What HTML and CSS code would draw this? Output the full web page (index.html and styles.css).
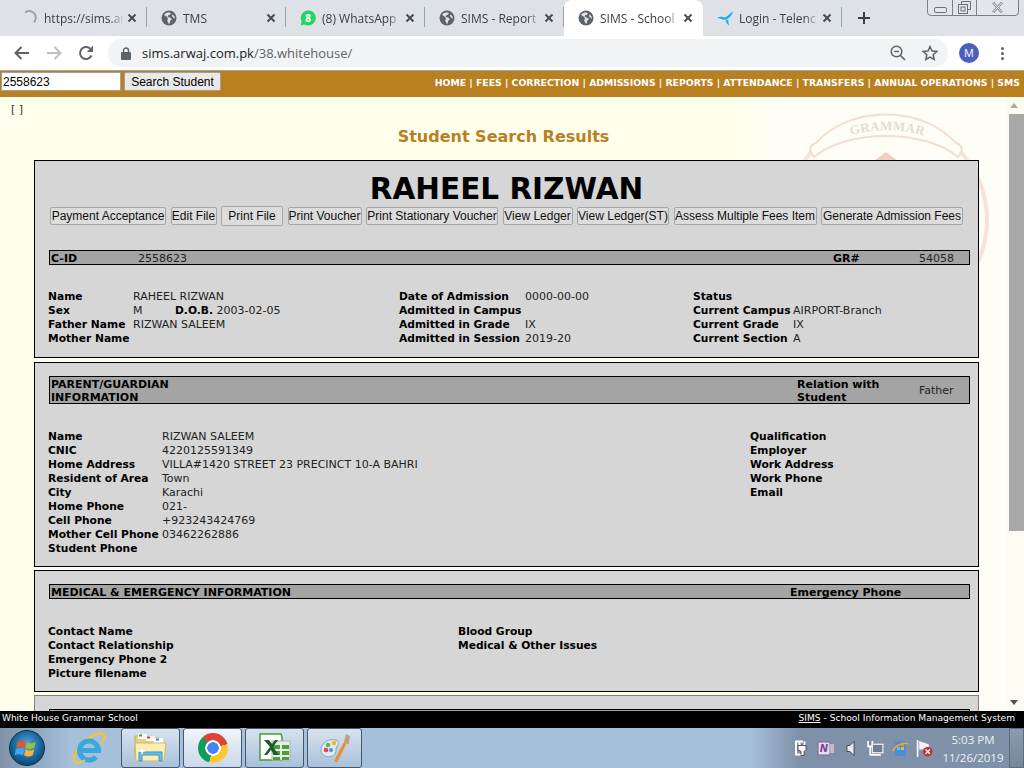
FILE: index.html
```html
<!DOCTYPE html>
<html>
<head>
    <title>SIMS - School Information Management System</title>
    <link rel="stylesheet" href="styles.css">
</head>
<body>

<svg class="defs" width="0" height="0">
    <symbol id="globe" viewBox="0 0 16 16">
        <circle cx="8" cy="8" r="7.5" fill="#5f6368"/>
        <path d="M8 2.2 5 3 3 5l2.6 1.4L7 8.6l-.8 2.2 1.6 2.9.9-.1.4-2.6 1.9-2-2.6-1.7-1.7-.4.4-1.6 1.6-.2L10 3.6z" fill="#dee1e6"/>
        <path d="M11.6 4.2l2 2.4.2 2.3-1.6-1.5-1.3-1.3z" fill="#dee1e6"/>
    </symbol>
    <symbol id="close" viewBox="0 0 10 10">
        <path d="M1.5 1.5l7 7M8.5 1.5l-7 7" stroke="#45494d" stroke-width="1.9" fill="none"/>
    </symbol>
</svg>

<div class="browser">

    <div class="tabstrip">
        <div class="tab">
            <svg class="tab-icon" viewBox="0 0 16 16"><path d="M3 2.6A6.5 6.5 0 0 1 13.5 9a6 6 0 0 1-1.5 3.4" fill="none" stroke="#9b9da1" stroke-width="1.8"/></svg>
            <span class="tab-title">https://sims.ar</span>
            <svg class="tab-close"><use href="#close"/></svg>
        </div>
        <div class="tab">
            <svg class="tab-icon"><use href="#globe"/></svg>
            <span class="tab-title">TMS</span>
            <svg class="tab-close"><use href="#close"/></svg>
        </div>
        <div class="tab">
            <svg class="tab-icon" viewBox="0 0 16 16">
                <path d="M.5 15.500l1.200-4A7.500 7.500 0 1 1 4.500 14.400z" fill="#25d366"/>
                <text x="8" y="11.500" class="wa-count">8</text>
            </svg>
            <span class="tab-title">(8) WhatsApp</span>
            <svg class="tab-close"><use href="#close"/></svg>
        </div>
        <div class="tab">
            <svg class="tab-icon"><use href="#globe"/></svg>
            <span class="tab-title">SIMS - Report</span>
            <svg class="tab-close"><use href="#close"/></svg>
        </div>
        <div class="tab tab-active">
            <svg class="tab-icon"><use href="#globe"/></svg>
            <span class="tab-title">SIMS - School</span>
            <svg class="tab-close"><use href="#close"/></svg>
        </div>
        <div class="tab tab-last">
            <svg class="tab-icon" viewBox="0 0 17 16">
                <path d="M0 8C3 6 6 6.500 8.500 7.500 11 6.500 14 3 17 .5 16 5 13 8.500 10 9.500 7 10.500 3 8 0 8z" fill="#19aaf8"/>
                <path d="M9 10.500c1 0 2-.5 2.800-1 .2 2.500.6 4.500 1.200 6.500-2-1-3.500-3-4-5.500z" fill="#19aaf8"/>
            </svg>
            <span class="tab-title">Login - Telenc</span>
            <svg class="tab-close"><use href="#close"/></svg>
        </div>
        <svg class="new-tab" viewBox="0 0 12 12"><path d="M6 0v12M0 6h12" stroke="#3c4043" stroke-width="2"/></svg>
        <div class="window-controls">
            <div class="win-btn win-min"><svg width="13" height="7" viewBox="0 0 13 7"><rect x=".5" y=".5" width="12" height="5" rx="1.500" fill="#e6e8ec" stroke="#6c7076"/></svg></div>
            <div class="win-btn win-max"><svg width="13" height="13" viewBox="0 0 13 13"><path d="M3.500 3V.5h9v8H10" fill="none" stroke="#6c7076"/><rect x=".5" y="3.500" width="9" height="9" fill="#e6e8ec" stroke="#6c7076"/><rect x="3" y="6" width="4" height="4" fill="none" stroke="#6c7076"/></svg></div>
            <div class="win-btn win-close"><svg width="13" height="11" viewBox="0 0 13 11"><path d="M2 .5l9 10M11 .5l-9 10" stroke="#868a90" stroke-width="2.500"/><path d="M2 .5l9 10M11 .5l-9 10" stroke="#eceef1" stroke-width="1"/></svg></div>
        </div>
    </div>

    <div class="toolbar">
        <div class="nav-btn"><svg width="16" height="14" viewBox="0 0 16 14"><path d="M15 7H2M7.500 1 1.500 7l6 6" fill="none" stroke="#5f6368" stroke-width="2"/></svg></div>
        <div class="nav-btn"><svg width="16" height="14" viewBox="0 0 16 14"><path d="M1 7h13M8.500 1l6 6-6 6" fill="none" stroke="#bdc1c6" stroke-width="2"/></svg></div>
        <div class="nav-btn"><svg width="16" height="16" viewBox="0 0 16 16"><path d="M13.500 10.500A6 6 0 1 1 12.300 3.800" fill="none" stroke="#5f6368" stroke-width="2"/><path d="M15 .8V7H8.800z" fill="#5f6368"/></svg></div>
        <div class="omnibox">
            <svg class="lock" width="10" height="13" viewBox="0 0 10 13"><path d="M2.500 6V3.500a2.500 2.500 0 0 1 5 0V6" fill="none" stroke="#5f6368" stroke-width="1.400"/><rect y="5" width="10" height="8" rx="1" fill="#5f6368"/></svg>
            <span class="url">sims.arwaj.com.pk<span class="url-path">/38.whitehouse/</span></span>
            <svg class="omni-icon" viewBox="0 0 16 16"><circle cx="6.500" cy="6.500" r="5.300" fill="none" stroke="#5f6368" stroke-width="1.500"/><path d="M10.500 10.500l4.500 4.500" stroke="#5f6368" stroke-width="1.700"/><path d="M4 6.500h5" stroke="#5f6368" stroke-width="1.400"/></svg>
            <svg class="omni-icon" viewBox="0 0 16 16"><path d="M8 1.500l2 4.500 4.800.5-3.600 3.200 1 4.800L8 12.100 3.800 14.500l1-4.800L1.200 6.500 6 6z" fill="none" stroke="#5f6368" stroke-width="1.500"/></svg>
        </div>
        <div class="avatar">M</div>
        <div class="kebab"><i></i><i></i><i></i></div>
    </div>

    <div class="topnav">
        <form class="search">
            <input class="search-input" type="text" value="2558623">
            <input class="search-btn" type="button" value="Search Student">
        </form>
        <div class="menu">
            <a>HOME</a> | <a>FEES</a> | <a>CORRECTION</a> | <a>ADMISSIONS</a> | <a>REPORTS</a> | <a>ATTENDANCE</a> | <a>TRANSFERS</a> | <a>ANNUAL OPERATIONS</a> | <a>SMS</a>
        </div>
    </div>

    <div class="page">
        <div class="page-main">
            <!-- school crest behind the cards -->
            <svg class="crest" width="245" height="400" viewBox="0 0 245 400">
                <defs><path id="crest-arc" d="M88 39A130 130 0 0 1 164 39"/></defs>
                <circle cx="126" cy="123" r="101" fill="none" stroke="#f6e2d8" stroke-width="4"/>
                <path d="M54 60C48 52 50 48 56 46 90 8 162 8 196 46 202 48 204 52 198 60 165 32 87 32 54 60z" fill="#fffef6" stroke="#f3ddd0" stroke-width="2"/>
                <path d="M114 64l12-9 12 9z" fill="#f3cfc0"/>
                <text class="crest-text"><textPath href="#crest-arc" startOffset="3">GRAMMAR</textPath></text>
            </svg>

            <div class="crumbs">[ ]</div>
            <h1 class="results-title">Student Search Results</h1>

            <div class="card card-student">
                <div class="student-name">RAHEEL RIZWAN</div>
                <div class="actions">
                    <button class="action">Payment Acceptance</button>
                    <button class="action">Edit File</button>
                    <button class="action action-wide">Print File</button>
                    <button class="action">Print Voucher</button>
                    <button class="action">Print Stationary Voucher</button>
                    <button class="action">View Ledger</button>
                    <button class="action">View Ledger(ST)</button>
                    <button class="action">Assess Multiple Fees Item</button>
                    <button class="action">Generate Admission Fees</button>
                </div>
                <div class="bar bar-student">
                    <b>C-ID</b><span>2558623</span><b>GR#</b><span>54058</span>
                </div>
                <div class="info info-student">
                    <div class="fields fields-a">
                        <b>Name</b><span>RAHEEL RIZWAN</span>
                        <b>Sex</b><span><span class="sex">M</span><b>D.O.B.</b> 2003-02-05</span>
                        <b>Father Name</b><span>RIZWAN SALEEM</span>
                        <b>Mother Name</b><span></span>
                    </div>
                    <div class="fields fields-b">
                        <b>Date of Admission</b><span>0000-00-00</span>
                        <b>Admitted in Campus</b><span></span>
                        <b>Admitted in Grade</b><span>IX</span>
                        <b>Admitted in Session</b><span>2019-20</span>
                    </div>
                    <div class="fields fields-c">
                        <b>Status</b><span></span>
                        <b>Current Campus</b><span>AIRPORT-Branch</span>
                        <b>Current Grade</b><span>IX</span>
                        <b>Current Section</b><span>A</span>
                    </div>
                </div>
            </div>

            <div class="card">
                <div class="bar bar-parent">
                    <b>PARENT/GUARDIAN<br>INFORMATION</b><b>Relation with<br>Student</b><span>Father</span>
                </div>
                <div class="info info-parent">
                    <div class="fields fields-d">
                        <b>Name</b><span>RIZWAN SALEEM</span>
                        <b>CNIC</b><span>4220125591349</span>
                        <b>Home Address</b><span>VILLA#1420 STREET 23 PRECINCT 10-A BAHRI</span>
                        <b>Resident of Area</b><span>Town</span>
                        <b>City</b><span>Karachi</span>
                        <b>Home Phone</b><span>021-</span>
                        <b>Cell Phone</b><span>+923243424769</span>
                        <b>Mother Cell Phone</b><span>03462262886</span>
                        <b>Student Phone</b><span></span>
                    </div>
                    <div class="labels">
                        <b>Qualification</b>
                        <b>Employer</b>
                        <b>Work Address</b>
                        <b>Work Phone</b>
                        <b>Email</b>
                    </div>
                </div>
            </div>

            <div class="card">
                <div class="bar bar-medical">
                    <b>MEDICAL &amp; EMERGENCY INFORMATION</b><b>Emergency Phone</b>
                </div>
                <div class="info info-medical">
                    <div class="labels">
                        <b>Contact Name</b>
                        <b>Contact Relationship</b>
                        <b>Emergency Phone 2</b>
                        <b>Picture filename</b>
                    </div>
                    <div class="labels">
                        <b>Blood Group</b>
                        <b>Medical &amp; Other Issues</b>
                    </div>
                </div>
            </div>

            <div class="card card-next">
                <div class="bar">&nbsp;</div>
            </div>
        </div>

        <div class="scrollbar">
            <div class="arrow arrow-up"></div>
            <div class="thumb"></div>
            <div class="arrow arrow-down"></div>
        </div>
    </div>

    <div class="statusbar">
        <span class="school">White House Grammar School</span>
        <span><u>SIMS</u> - School Information Management System</span>
    </div>

    <div class="taskbar">
        <div class="orb">
            <svg width="26" height="26" viewBox="0 0 24 24">
                <path d="M3 7c3-2 5-2 8-.6L9.700 12C7 10.700 5 10.700 2 12z" fill="#e8532f"/>
                <path d="M12 6.800c3 1.300 5 1.300 8-.3l-1.300 5.600c-3 1.500-5 1.400-8-.2z" fill="#8cc63f"/>
                <path d="M1.800 13c3-1.300 5-1.300 7.800 0l-1.300 5.700c-3-1.300-5-1.300-7.800 0z" fill="#3fa9f5"/>
                <path d="M10.600 13.200c3 1.500 5 1.500 8 .1l-1.300 5.500c-3 1.500-5 1.500-8-.1z" fill="#fbb03b"/>
            </svg>
        </div>
        <div class="pin">
            <svg width="34" height="34" viewBox="0 0 34 34">
                <path d="M3 31C-1 26 8 12 18 6c7-4 13-5 14-2 1 2-1 6-3 9" fill="none" stroke="#f5c531" stroke-width="2.500"/>
                <path d="M7.500 19.500H26.500A9.500 9.500 0 1 0 24 26" fill="none" stroke="#3ba7e0" stroke-width="5"/>
                <path d="M3 31c3 2 7 0 10-2" fill="none" stroke="#f5c531" stroke-width="2"/>
            </svg>
        </div>
        <div class="app">
            <svg width="33" height="30" viewBox="0 0 33 30">
                <path d="M1 3h12l2 2h10v20H1z" fill="#e9cf82" stroke="#c9ad62"/>
                <rect x="4" y="1" width="9" height="5" fill="#fff"/><rect x="5" y="1.500" width="3" height="2" fill="#29a745"/>
                <rect x="12" y="3" width="9" height="5" fill="#fff"/><rect x="13" y="3.500" width="3" height="2" fill="#d33"/>
                <rect x="20" y="5" width="9" height="5" fill="#fff"/><rect x="22" y="5.500" width="3" height="2" fill="#2b8be0"/>
                <path d="M1 10h31l-2 18H2z" fill="#fbeeb2" stroke="#d1b86f"/>
                <path d="M5 28V19h23v9h-3v-6H8v6z" fill="#6cc0e8" stroke="#3f93c0"/>
                <path d="M8 14l1 3 3 1-3 1-1 3-1-3-3-1 3-1z" fill="#fff"/>
            </svg>
        </div>
        <div class="app app-active"><div class="chrome-logo"></div></div>
        <div class="app">
            <svg width="32" height="30" viewBox="0 0 32 30">
                <path d="M1 1h21l1 3v23H1z" fill="#fff" stroke="#4b9a3c" stroke-width="1.500"/>
                <rect x="13" y="8" width="18" height="19" fill="#e6efdd" stroke="#aab9a0"/>
                <path d="M14 12h7v4h-7zM23 12h7v4h-7zM14 18h7v4h-7zM23 18h7v4h-7zM14 24h7v3h-7zM23 24h7v3h-7z" fill="#4f9a45"/>
                <path d="M5 7h5l3 4 3-4h3l-5 7 6 8h-5l-3-5-4 5H5l6-8z" fill="#1f5a2a"/>
            </svg>
        </div>
        <div class="app app-last">
            <svg width="32" height="32" viewBox="0 0 32 32">
                <path d="M2 18C2 11 10 6 17 8c3 1 3 4 1 6-2 3 0 5-2 8-3 4-14 4-14-4z" fill="#dfe9f2" stroke="#8ea5bd"/>
                <circle cx="7" cy="18" r="2.300" fill="#e8454a"/><circle cx="9" cy="13" r="2.300" fill="#65b54a"/>
                <circle cx="15" cy="11" r="2.300" fill="#f2b632"/><circle cx="12" cy="18" r="2" fill="#4b8fd9"/>
                <path d="M15 29l10-19 2.500 1.500-9.500 19z" fill="#ee8b2c"/>
                <path d="M25 10l2-8 4 2-1.500 8.500z" fill="#bda27a"/>
            </svg>
        </div>
        <div class="tray">
            <svg width="14" height="17" viewBox="0 0 14 16"><path d="M8 1H1v13h7" fill="none" stroke="#fff" stroke-width="2"/><path d="M4.500 1v4M9.500 1v4" stroke="#fff" stroke-width="2"/><path d="M3 5h8v4l-2 2v4H6v-4L3 9z" fill="#fff" stroke="#222" stroke-width=".7"/></svg>
            <svg width="18" height="17" viewBox="0 0 18 17">
                <path d="M1 2h12v13H1z" fill="#e6dcec" stroke="#8a5d98"/>
                <path d="M13 4h4v9h-4z" fill="#c9b6d0"/>
                <text x="7" y="12" class="note-letter">N</text>
            </svg>
            <svg width="9" height="17" viewBox="0 0 9 16"><path d="M1 5h3l4-4v14l-4-4H1z" fill="#e8ebee" stroke="#222" stroke-width=".7"/></svg>
            <svg width="17" height="17" viewBox="0 0 16 16"><path d="M1 1v5h4V1M3 6v8h10" fill="none" stroke="#fff" stroke-width="1.500"/><rect x="5" y="4" width="10" height="8" fill="#6d7f92" stroke="#fff"/></svg>
            <svg width="17" height="17" viewBox="0 0 17 17"><rect x="3" y="1" width="11" height="15" fill="#4c8fd6"/><path d="M5 3h3v3H5z" fill="#e8532f"/><path d="M9 3h3v3H9z" fill="#8cc63f"/><path d="M5 7h3v3H5z" fill="#3fd0f5"/><path d="M9 7h3v3H9z" fill="#fbb03b"/><path d="M1 11C3 5 12 2 16 4" fill="none" stroke="#f5a531" stroke-width="1.500"/></svg>
            <svg width="17" height="17" viewBox="0 0 16 16"><path d="M1.500 0v16" stroke="#fff" stroke-width="1.500"/><path d="M3 1l9 3v5L3 9z" fill="#f2f4f6"/><circle cx="11" cy="11" r="4.500" fill="#d9262c"/><path d="M9 9l4 4M13 9l-4 4" stroke="#fff" stroke-width="1.400"/></svg>
        </div>
        <div class="clock">
            <span>5:03 PM</span>
            <span>11/26/2019</span>
        </div>
        <div class="show-desktop"></div>
    </div>

</div>

</body>
</html>
```

FILE: styles.css
```css
* {
    box-sizing: border-box;
}

body {
    margin: 0;
    font-family: "DejaVu Sans", Verdana, sans-serif;
    font-size: 11px;
}

.defs {
    position: absolute;
}

.browser {
    display: flex;
    flex-direction: column;
    height: 768px;
    overflow: hidden;
}

/* tab strip */
.tabstrip {
    display: flex;
    align-items: center;
    height: 36px;
    padding-left: 8px;
    background-color: #dee1e6;
    font-family: "Open Sans", sans-serif;
    font-size: 12px;
    color: #3c4043;
}

.tab {
    display: flex;
    align-items: center;
    flex: none;
    width: 139px;
    height: 36px;
    padding: 0 10px 0 14px;
    position: relative;
}

.tab::after {
    content: "";
    position: absolute;
    right: 0;
    top: 7px;
    height: 20px;
    border-right: 1px solid #9aa0a6;
}

.tab-active {
    background-color: #fff;
    border-radius: 8px 8px 0 0;
}

.tab-active::after {
    display: none;
}

.tab-icon {
    flex: none;
    width: 16px;
    height: 16px;
    margin-right: 6px;
}

.tab-title {
    flex: 1;
    overflow: hidden;
    white-space: nowrap;
    -webkit-mask-image: linear-gradient(to right, #000 82%, transparent 100%);
    mask-image: linear-gradient(to right, #000 82%, transparent 100%);
}

.tab-close {
    flex: none;
    width: 10px;
    height: 10px;
    margin-left: 3px;
}

.wa-count {
    font-family: "Open Sans", sans-serif;
    font-size: 10px;
    font-weight: 700;
    fill: #fff;
    text-anchor: middle;
}

.new-tab {
    width: 12px;
    height: 12px;
    margin-left: 16px;
}

.window-controls {
    display: flex;
    align-self: flex-start;
    height: 17px;
    margin-left: auto;
    margin-right: 5px;
    margin-top: -1px;
    border: 1px solid #7b8087;
    border-radius: 0 0 4px 4px;
    background-color: #e3e5e9;
}

.win-btn {
    display: flex;
    align-items: center;
    justify-content: center;
    border-right: 1px solid #7b8087;
}

.win-min { width: 25px; padding-top: 5px; }
.win-max { width: 24px; }
.win-close { width: 41px; border-right: 0; }

/* address bar */
.toolbar {
    display: flex;
    align-items: center;
    height: 34px;
    padding-left: 6px;
    background-color: #fff;
}

.nav-btn {
    display: flex;
    align-items: center;
    justify-content: center;
    width: 32px;
}

.omnibox {
    display: flex;
    align-items: center;
    gap: 16px;
    flex: none;
    width: 840px;
    height: 28px;
    margin-left: 6px;
    padding: 0 10px 0 13px;
    border-radius: 14px;
    background-color: #f1f3f4;
}

.lock {
    margin-right: -5px;
}

.url {
    flex: 1;
    font-family: "Open Sans", sans-serif;
    font-size: 13px;
    color: #202124;
}

.url-path {
    color: #5f6368;
}

.omni-icon {
    width: 16px;
    height: 16px;
}

.avatar {
    width: 20px;
    height: 20px;
    margin-left: 11px;
    border-radius: 50%;
    background-color: #4b5fc0;
    color: #fff;
    font-family: "Open Sans", sans-serif;
    font-size: 11px;
    line-height: 20px;
    text-align: center;
}

.kebab {
    display: flex;
    flex-direction: column;
    gap: 2px;
    margin-left: 22px;
}

.kebab i {
    width: 3px;
    height: 3px;
    border-radius: 50%;
    background-color: #5f6368;
}

/* site navigation */
.topnav {
    display: flex;
    align-items: flex-start;
    justify-content: space-between;
    height: 27px;
    padding: 1px 4px 0 1px;
    border-top: 1px solid #a3a3a3;
    background-color: #b8801f;
}

.search {
    display: flex;
    gap: 3px;
    margin: 0;
}

.search-input {
    width: 120px;
    height: 19px;
    padding: 0 1px;
    border: 1px solid #a0a0a0;
    background-color: #fff;
    font-family: "Liberation Sans", Arial, sans-serif;
    font-size: 12px;
    color: #000;
}

.search-btn {
    width: 97px;
    height: 19px;
    padding: 0;
    border: 1px solid #a0a0a0;
    border-radius: 2px;
    background-color: #e9e9e9;
    font-family: "Liberation Sans", Arial, sans-serif;
    font-size: 12px;
    color: #000;
}

.menu {
    padding-top: 4px;
    color: #fff;
    font-size: 9.3px;
    font-weight: 700;
    line-height: 14px;
    white-space: nowrap;
}

/* page */
.page {
    display: flex;
    flex: 1;
    min-height: 0;
    background-color: #ffffee;
}

.page-main {
    flex: 1;
    min-width: 0;
    position: relative;
    overflow: hidden;
    padding-top: 6px;
    background: linear-gradient(to right, #ffffee 740px, #fffef6 775px);
}

.crest {
    position: absolute;
    left: 760px;
    top: 0;
}

.crest-text {
    font-family: "Liberation Serif", serif;
    font-size: 13px;
    font-weight: 700;
    letter-spacing: .2px;
    fill: #e4dcd2;
}

.crumbs {
    position: relative;
    margin-left: 11px;
    line-height: 14px;
    color: #333;
}

.results-title {
    position: relative;
    margin: 10px 0 13px;
    color: #b8801f;
    font-size: 16px;
    font-weight: 700;
    line-height: 20px;
    text-align: center;
}

.card {
    position: relative;
    margin: 3px 28px 0 34px;
    padding: 13px 8px 11px 13px;
    border: 1px solid #000;
    background-color: #d6d6d6;
    color: #222;
    line-height: 14px;
}

.card b {
    color: #000;
}

.card-student {
    margin-top: 0;
    margin-bottom: 4px;
    padding-top: 10px;
    padding-bottom: 12px;
}

.card-next {
    border-color: #808080;
}

.student-name {
    padding-right: 5px;
    color: #000;
    font-size: 29.5px;
    font-weight: 700;
    line-height: 36px;
    text-align: center;
}

.actions {
    display: grid;
    grid-template-columns: 116px 46px 62px 74px 132px 70px 92px 143px 142px;
    align-items: center;
    column-gap: 4.5px;
    height: 20px;
    margin: -1px 0 24px 2px;
}

.action {
    height: 18px;
    padding: 0;
    border: 1px solid #a6a6a6;
    border-radius: 2px;
    background-color: #dcdcdc;
    font-family: "Liberation Sans", Arial, sans-serif;
    font-size: 12px;
    color: #111;
    white-space: nowrap;
}

.action-wide {
    height: 20px;
}

.bar {
    display: grid;
    margin-left: 1px;
    padding-left: 1px;
    border: 1px solid #000;
    background-color: #a4a4a4;
    line-height: 13px;
}

.bar > * {
    margin: 1px 0 -1px;
}

.bar > span {
    font-size: 11px;
}

.bar-student { grid-template-columns: 87px 695px 86px 1fr; }
.bar-parent { grid-template-columns: 746px 122px 1fr; align-items: center; }
.bar-parent > span { margin: 0; }
.bar-medical { grid-template-columns: 739px 1fr; }

.info {
    display: grid;
    margin-top: 25px;
    margin-bottom: -1px;
    white-space: nowrap;
}

.info b {
    font-size: 10.7px;
}

.info-student { grid-template-columns: 351px 294px 1fr; }
.info-parent { grid-template-columns: 702px 1fr; margin-top: 26px; }
.info-medical { grid-template-columns: 410px 1fr; margin-top: 26px; }

.fields {
    display: grid;
    align-content: start;
}

.fields-a { grid-template-columns: 85px 1fr; }
.fields-b { grid-template-columns: 126px 1fr; }
.fields-c { grid-template-columns: 100px 1fr; }
.fields-d { grid-template-columns: 114px 1fr; }

.fields > span {
    min-height: 14px;
}

.labels {
    display: flex;
    flex-direction: column;
}

.sex {
    display: inline-block;
    width: 42px;
}

/* scrollbar */
.scrollbar {
    display: flex;
    flex: none;
    flex-direction: column;
    width: 17px;
    padding-left: 2px;
    background-color: #fbfbf1;
}

.arrow {
    flex: none;
    width: 0;
    height: 0;
    margin: 6px 0 0 1px;
    border-left: 4px solid transparent;
    border-right: 4px solid transparent;
}

.arrow-up {
    border-bottom: 5px solid #a8a8a8;
}

.arrow-down {
    margin-top: auto;
    margin-bottom: 6px;
    border-top: 5px solid #505050;
}

.thumb {
    height: 417px;
    margin-top: 6px;
    background-color: #a8a8a8;
}

/* status line */
.statusbar {
    display: flex;
    justify-content: space-between;
    flex: none;
    height: 17px;
    padding: 0 9px 0 2px;
    background-color: #000;
    color: #fff;
    font-size: 9.1px;
    line-height: 14px;
}

.school {
    font-size: 9px;
}

/* windows taskbar */
.taskbar {
    display: flex;
    align-items: stretch;
    flex: none;
    height: 40px;
    background: linear-gradient(to right, #7f92a8 0, #a6bfda 72px, #a6bfda 750px, #7f91a8 800px);
}

.orb {
    display: flex;
    align-items: center;
    justify-content: center;
    align-self: center;
    width: 36px;
    height: 36px;
    margin-left: 9px;
    border: 1px solid #0b2c45;
    border-radius: 50%;
    background: radial-gradient(circle at 50% 40%, #5aa7d8 0, #14629c 55%, #062d4c 100%);
}

.pin {
    display: flex;
    align-items: center;
    margin-left: 27px;
    width: 49px;
}

.app {
    display: flex;
    align-items: center;
    justify-content: center;
    width: 59px;
    margin-right: 3px;
    border: 1px solid #44576b;
    border-radius: 3px;
    background: linear-gradient(to bottom, #d7e2ee, #a9c1dc);
}

.app-active {
    background: linear-gradient(to bottom, #f1f5fa, #c9d8ea);
}

.app-last {
    width: 55px;
    margin-right: 0;
}

.chrome-logo {
    width: 30px;
    height: 30px;
    border-radius: 50%;
    background:
        radial-gradient(circle, #4285f4 0 5.5px, #fff 6px 7.5px, transparent 8px),
        conic-gradient(from -45deg, #db4437 0 120deg, #fcc934 0 240deg, #0f9d58 0);
}

.tray {
    display: grid;
    grid-auto-flow: column;
    grid-auto-columns: 24.6px;
    justify-items: center;
    align-items: center;
    margin-left: auto;
}

.note-letter {
    font-family: "DejaVu Sans", sans-serif;
    font-size: 10px;
    font-style: italic;
    font-weight: 700;
    fill: #7a4a8e;
    text-anchor: middle;
}

.clock {
    display: flex;
    flex-direction: column;
    align-items: center;
    justify-content: center;
    gap: 1px;
    width: 72px;
    color: #eef2f6;
    font-family: "Open Sans", sans-serif;
    font-size: 11.5px;
    line-height: 17px;
}

.show-desktop {
    flex: none;
    width: 15px;
    border: 1px solid #5c6c7e;
    background: linear-gradient(to bottom, #8b9cb0, #75879b);
}
```
